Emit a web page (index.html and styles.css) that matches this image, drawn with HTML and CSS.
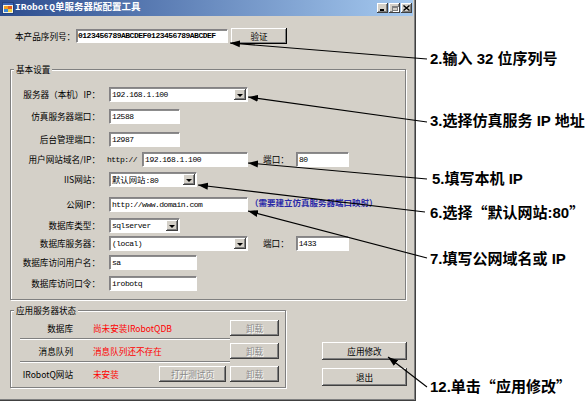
FILE: index.html
```html
<!DOCTYPE html>
<html lang="zh-CN">
<head>
<meta charset="utf-8">
<title>IRobotQ单服务器版配置工具</title>
<link rel="stylesheet" href="styles.css">
</head>
<body>
<div class="stage">
  <div class="window">
    <div class="titlebar">
      <svg class="appicon" width="12" height="12" viewBox="0 0 12 12">
        <rect x="0.5" y="0.5" width="11" height="11" fill="#f6f2e0" stroke="#24427e"/>
        <rect x="1" y="1" width="10" height="2" fill="#3b64b4"/>
        <rect x="2" y="4" width="4" height="3" fill="#f0a020"/>
        <rect x="6" y="4" width="4" height="3" fill="#e05a20"/>
        <rect x="2" y="7" width="4" height="3" fill="#3c8ad8"/>
        <rect x="6" y="7" width="4" height="3" fill="#f0d040"/>
      </svg>
      <span class="title">IRobotQ单服务器版配置工具</span>
      <div class="caption-btns">
        <span class="cbtn"><span class="g-min"></span></span>
        <span class="cbtn"><span class="g-max"></span></span>
        <span class="cbtn"><svg width="7" height="6" viewBox="0 0 7 6"><path d="M0.5 0.5 L6.5 5.5 M6.5 0.5 L0.5 5.5" stroke="#000" stroke-width="1.4"/></svg></span>
      </div>
    </div>

    <div class="client">
      <div class="serial-row">
        <span class="lbl serial-lbl">本产品序列号：</span>
        <div class="tb serial"><span class="txt bold">0123456789ABCDEF0123456789ABCDEF</span></div>
        <div class="btn verify">验证</div>
      </div>

      <div class="group basic">
        <span class="group-title">基本设置</span>
        <div class="form-grid">
          <span class="lbl">服务器（本机）IP：</span>
          <div class="field"><div class="combo w139"><span class="txt">192.168.1.100</span><span class="drop"></span></div></div>

          <span class="lbl">仿真服务器端口：</span>
          <div class="field"><div class="tb w71"><span class="txt">12588</span></div></div>

          <span class="lbl">后台管理端口：</span>
          <div class="field"><div class="tb w71"><span class="txt">12987</span></div></div>

          <span class="lbl">用户网站域名/IP：</span>
          <div class="field"><span class="prefix">http://</span><div class="tb w106"><span class="txt">192.168.1.100</span></div><span class="lbl port-lbl">端口：</span><div class="tb w53"><span class="txt">80</span></div></div>

          <span class="lbl">IIS网站：</span>
          <div class="field"><div class="combo w88"><span class="txt"><span class="cjk">默认网站</span>:80</span><span class="drop"></span></div></div>

          <span class="lbl">公网IP：</span>
          <div class="field"><div class="tb w139"><span class="txt">http://www.domain.com</span></div><span class="hint">（需要建立仿真服务器端口映射）</span></div>

          <span class="lbl">数据库类型：</span>
          <div class="field"><div class="combo w71"><span class="txt">sqlserver</span><span class="drop"></span></div></div>

          <span class="lbl">数据库服务器：</span>
          <div class="field"><div class="combo w139"><span class="txt">(local)</span><span class="drop"></span></div><span class="lbl port-lbl">端口：</span><div class="tb w53"><span class="txt">1433</span></div></div>

          <span class="lbl">数据库访问用户名：</span>
          <div class="field"><div class="tb w88"><span class="txt">sa</span></div></div>

          <span class="lbl">数据库访问口令：</span>
          <div class="field"><div class="tb w88"><span class="txt">irobotq</span></div></div>
        </div>
      </div>

      <div class="bottom">
        <div class="group status">
          <span class="group-title">应用服务器状态</span>
          <div class="srow">
            <span class="slbl">数据库</span>
            <span class="sval">尚未安装IRobotQDB</span>
            <span class="btn disabled w49">卸载</span>
          </div>
          <div class="sep"></div>
          <div class="srow">
            <span class="slbl">消息队列</span>
            <span class="sval">消息队列还不存在</span>
            <span class="btn disabled w49">卸载</span>
          </div>
          <div class="sep"></div>
          <div class="srow">
            <span class="slbl">IRobotQ网站</span>
            <span class="sval">未安装</span>
            <span class="btn disabled w67">打开测试页</span>
            <span class="btn disabled w49">卸载</span>
          </div>
        </div>
        <div class="actions">
          <div class="btn act">应用修改</div>
          <div class="btn act">退出</div>
        </div>
      </div>
    </div>
  </div>

  <div class="note n2">2.输入 32 位序列号</div>
  <div class="note n3">3.选择仿真服务 IP 地址</div>
  <div class="note n5">5.填写本机 IP</div>
  <div class="note n6">6.选择<span class="cjk">“</span>默认网站:80<span class="cjk">”</span></div>
  <div class="note n7">7.填写公网域名或 IP</div>
  <div class="note n12">12.单击<span class="cjk">“</span>应用修改<span class="cjk">”</span></div>

  <svg class="arrows" width="586" height="403" viewBox="0 0 586 403">
    <defs>
      <marker id="ah" markerUnits="userSpaceOnUse" markerWidth="10" markerHeight="8" refX="0" refY="4" orient="auto">
        <path d="M0 4 L10 0.5 L10 7.5 Z" fill="#000"/>
      </marker>
    </defs>
    <g stroke="#000" stroke-width="1.1" fill="none">
      <line x1="230" y1="43" x2="427" y2="59" marker-start="url(#ah)"/>
      <line x1="248" y1="97" x2="427" y2="122" marker-start="url(#ah)"/>
      <line x1="248" y1="163" x2="427" y2="179" marker-start="url(#ah)"/>
      <line x1="198" y1="185" x2="425" y2="212" marker-start="url(#ah)"/>
      <line x1="248" y1="211" x2="427" y2="258" marker-start="url(#ah)"/>
      <line x1="388" y1="357" x2="427" y2="387" marker-start="url(#ah)"/>
    </g>
  </svg>
</div>
</body>
</html>
```

FILE: styles.css
```css
* { box-sizing: border-box; }
html, body { margin: 0; padding: 0; }
body {
  width: 586px;
  height: 403px;
  overflow: hidden;
  background: #fff;
  font-family: "Noto Sans CJK SC", sans-serif;
  color: #000;
}
.stage { position: relative; width: 586px; height: 403px; }

.window {
  width: 416px;
  height: 401px;
  background: #d4d0c8;
  box-shadow: inset -1px -1px #404040, inset -2px -2px #808080;
  display: flex;
  flex-direction: column;
}

/* title bar */
.titlebar {
  height: 16px;
  margin-right: 3px;
  padding-left: 2px;
  background: linear-gradient(90deg, #2c4c8e 0%, #a6caf0 100%);
  display: flex;
  align-items: center;
}
.appicon { display: block; margin-right: 1px; }
.title {
  color: #fff;
  font-family: "Liberation Mono", "Noto Sans CJK SC", monospace;
  font-weight: bold;
  font-size: 9.5px;
  line-height: 16px;
  white-space: nowrap;
}
.caption-btns { margin-left: auto; margin-right: 1px; display: flex; gap: 1px; }
.cbtn {
  width: 11px;
  height: 10px;
  background: #d4d0c8;
  box-shadow: inset -1px -1px #404040, inset 1px 1px #fff, inset -2px -2px #808080;
  display: flex;
  align-items: center;
  justify-content: center;
}
.cbtn svg { display: block; }
.g-min { width: 4px; height: 2px; background: #000; align-self: flex-end; margin-bottom: 2px; margin-right: 2px; }
.g-max { width: 6px; height: 5px; border: 1px solid #808080; border-top-width: 2px; box-shadow: 1px 1px #fff; }

/* client */
.client {
  flex: 1;
  padding: 12px 0 0 10px;
  display: flex;
  flex-direction: column;
}

.lbl {
  font-size: 8.6px;
  line-height: 15px;
  white-space: nowrap;
}

.serial-row { display: flex; align-items: center; height: 16px; padding-left: 5px; }
.serial-lbl { width: 61px; }

/* text boxes & combos */
.tb, .combo {
  height: 15px;
  background: #fff;
  border: 1px solid;
  border-color: #848284 #fff #fff #848284;
  box-shadow: inset 1px 1px rgba(0, 0, 0, 0.45);
  display: flex;
  align-items: center;
  overflow: hidden;
  flex: none;
}
.txt {
  padding-left: 2px;
  font-family: "Liberation Mono", "Noto Sans CJK SC", monospace;
  font-size: 8px;
  letter-spacing: -0.5px;
  line-height: 12px;
  white-space: nowrap;
}
.txt .cjk { font-family: "Noto Sans CJK SC", sans-serif; font-size: 8.4px; letter-spacing: 0; }
.txt.bold { font-weight: bold; padding-left: 1px; }
.tb.serial { width: 152px; height: 14px; }

.w53 { width: 53px; }
.w71 { width: 71px; }
.w88 { width: 88px; }
.w106 { width: 106px; }
.w139 { width: 139px; }

.drop {
  margin-left: auto;
  margin-right: 1px;
  width: 12px;
  height: 11px;
  flex: none;
  background: #d4d0c8;
  box-shadow: inset -1px -1px #404040, inset 1px 1px #fff, inset -2px -2px #808080;
  display: flex;
  align-items: center;
  justify-content: center;
}
.drop::after {
  content: "";
  border-left: 3px solid transparent;
  border-right: 3px solid transparent;
  border-top: 3px solid #000;
  margin-top: 1px;
}

/* buttons */
.btn {
  background: #d4d0c8;
  box-shadow: inset -1px -1px #404040, inset 1px 1px #fff, inset -2px -2px #808080;
  display: flex;
  align-items: center;
  justify-content: center;
  font-size: 8.6px;
  line-height: 12px;
  white-space: nowrap;
  flex: none;
}
.btn.verify { width: 56px; height: 16px; margin-left: 3px; box-shadow: inset -1px -1px #000, inset 1px 1px #fff, inset -2px -2px #808080; }
.btn.disabled { color: #8a8a8a; text-shadow: 1px 1px #fff; height: 16px; }
.w49 { width: 49px; }
.w67 { width: 67px; margin-right: 4px; }

/* group boxes */
.group {
  position: relative;
  border: 1px solid #808080;
  box-shadow: inset 1px 1px #fff, 1px 1px #fff;
}
.group-title {
  position: absolute;
  top: -5px;
  left: 3px;
  padding: 0 2px;
  background: #d4d0c8;
  font-size: 8.6px;
  line-height: 9px;
  white-space: nowrap;
}

.basic {
  width: 396px;
  margin-top: 25px;
  padding: 17px 0 8px 0;
}
.form-grid {
  display: grid;
  grid-template-columns: 89px 1fr;
  grid-template-rows: 22px 23px 20px 20px 25px 21px 18px 19px 21px 15px;
  column-gap: 9px;
}
.form-grid > .lbl { text-align: right; align-self: start; }
.field { display: flex; align-items: center; align-self: start; height: 15px; }
.prefix {
  margin-left: -2px;
  margin-right: 5px;
  font-family: "Liberation Mono", monospace;
  font-size: 8px;
  letter-spacing: -0.5px;
  white-space: nowrap;
}
.port-lbl { margin-left: 15px; margin-right: 7px; }
.hint {
  margin-left: 2px;
  color: #2a2aa8;
  font-size: 8.5px;
  font-weight: bold;
  line-height: 12px;
  white-space: nowrap;
  align-self: flex-start;
  margin-top: -1px;
}

/* bottom area */
.bottom { display: flex; margin-top: 10px; }
.status {
  width: 276px;
  padding: 6px 6px 3px 0;
}
.srow { height: 21px; display: flex; align-items: center; }
.slbl { width: 62px; text-align: right; font-size: 8.6px; white-space: nowrap; }
.sval { flex: 1; margin-left: 20px; color: #f00; font-size: 8.6px; white-space: nowrap; }
.sep {
  margin-left: 9px;
  width: 210px;
  height: 2px;
  border-top: 1px solid #808080;
  border-bottom: 1px solid #fff;
}

.actions {
  margin-left: 36px;
  align-self: flex-end;
  padding-bottom: 2px;
  display: flex;
  flex-direction: column;
  gap: 8px;
}
.btn.act { width: 85px; height: 18px; }

/* annotations */
.note {
  position: absolute;
  font-family: "Liberation Sans", "Noto Sans CJK SC", sans-serif;
  font-weight: bold;
  font-size: 15px;
  line-height: 16px;
  white-space: nowrap;
  color: #000;
}
.note .cjk { font-family: "Noto Sans CJK SC", sans-serif; }
.n2 { left: 430px; top: 51px; }
.n3 { left: 430px; top: 113px; }
.n5 { left: 432px; top: 171px; }
.n6 { left: 430px; top: 204px; }
.n7 { left: 430px; top: 251px; }
.n12 { left: 430px; top: 378px; }

.arrows { position: absolute; left: 0; top: 0; pointer-events: none; }
```
